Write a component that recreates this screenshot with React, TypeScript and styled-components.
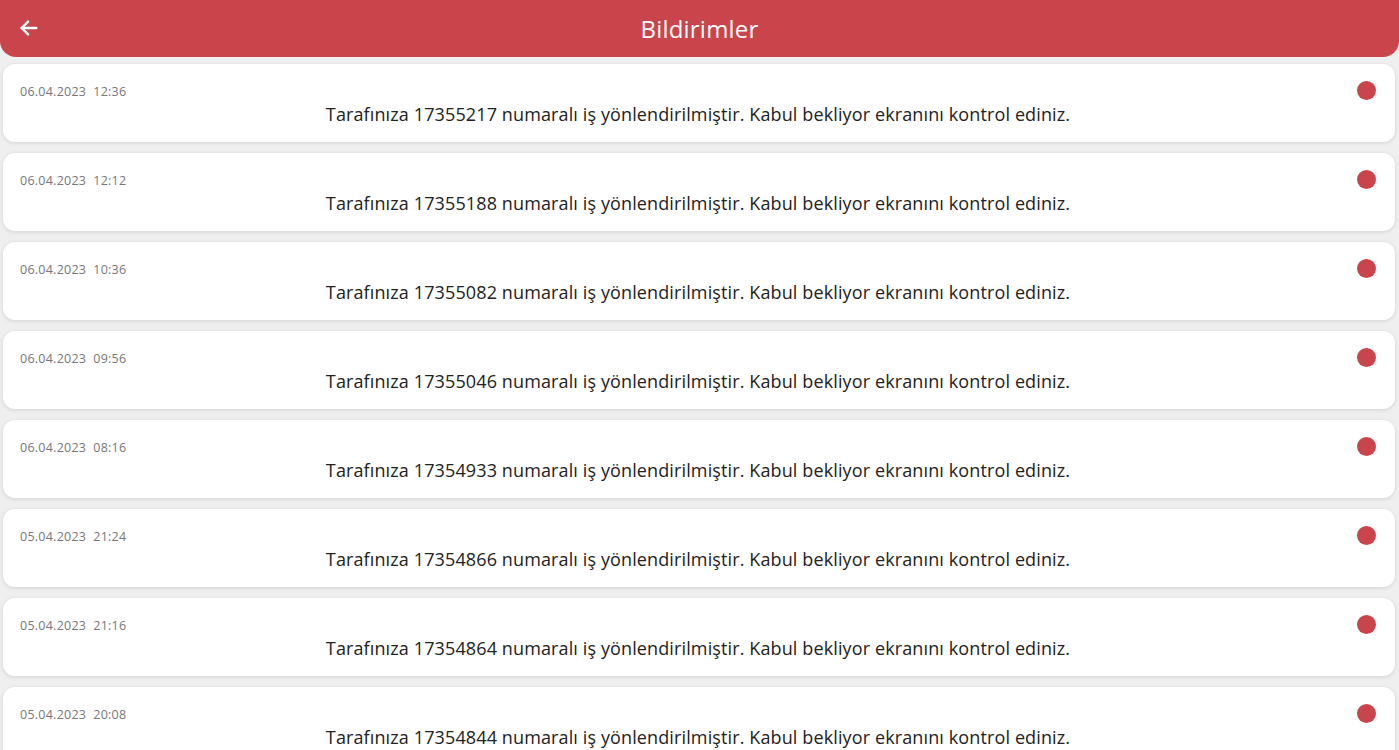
import styled, { createGlobalStyle } from 'styled-components';

const GlobalStyle = createGlobalStyle`
  html, body {
    margin: 0;
    padding: 0;
    background: #efefef;
    font-family: "Open Sans", "Noto Sans", sans-serif;
  }
`;

const notifications = [
  { date: '06.04.2023', time: '12:36', no: '17355217' },
  { date: '06.04.2023', time: '12:12', no: '17355188' },
  { date: '06.04.2023', time: '10:36', no: '17355082' },
  { date: '06.04.2023', time: '09:56', no: '17355046' },
  { date: '06.04.2023', time: '08:16', no: '17354933' },
  { date: '05.04.2023', time: '21:24', no: '17354866' },
  { date: '05.04.2023', time: '21:16', no: '17354864' },
  { date: '05.04.2023', time: '20:08', no: '17354844' },
];

const App = () => {
  return (
    <>
      <GlobalStyle />
      <Page>
        <Header>
          <BackButton aria-label="Geri">
            <svg width="22" height="22" viewBox="0 0 24 24" fill="none" stroke="#fff" strokeWidth="2.6" strokeLinecap="round" strokeLinejoin="round">
              <path d="M20 12H4" />
              <path d="M11 5l-7 7 7 7" />
            </svg>
          </BackButton>
          <Title>Bildirimler</Title>
        </Header>
        <List>
          {notifications.map((n) => (
            <Card key={n.no}>
              <CardTop>
                <Stamp>{n.date}&nbsp;&nbsp;{n.time}</Stamp>
                <Dot />
              </CardTop>
              <Message>
                Tarafınıza {n.no} numaralı iş yönlendirilmiştir. Kabul bekliyor ekranını kontrol ediniz.
              </Message>
            </Card>
          ))}
        </List>
      </Page>
    </>
  );
};

export default App;

const Page = styled.div`
  height: 750px;
  overflow: hidden;
  display: flex;
  flex-direction: column;
`;

const Header = styled.header`
  position: relative;
  height: 57px;
  flex-shrink: 0;
  background: #c9444b;
  border-radius: 0 0 16px 16px;
  display: flex;
  align-items: center;
  justify-content: center;
`;

const BackButton = styled.button`
  position: absolute;
  left: 18px;
  top: 17px;
  padding: 0;
  border: none;
  background: none;
  display: flex;
  cursor: pointer;
`;

const Title = styled.h1`
  margin: 0;
  color: #fff;
  font-size: 24px;
  font-weight: 400;
  letter-spacing: 0.2px;
`;

const List = styled.div`
  display: flex;
  flex-direction: column;
  gap: 11px;
  padding: 7px 4px 0 3px;
`;

const Card = styled.div`
  height: 78px;
  flex-shrink: 0;
  box-sizing: border-box;
  background: #fff;
  border-radius: 12px;
  box-shadow: 0 1px 4px rgba(0, 0, 0, 0.12);
  padding: 17px 19px 0 17px;
  display: flex;
  flex-direction: column;
`;

const CardTop = styled.div`
  display: flex;
  justify-content: space-between;
  align-items: flex-start;
  height: 19px;
`;

const Stamp = styled.span`
  font-size: 12.5px;
  letter-spacing: 0.25px;
  color: #777;
  margin-top: 2px;
`;

const Dot = styled.span`
  width: 19px;
  height: 19px;
  border-radius: 50%;
  background: #c9444b;
`;

const Message = styled.p`
  margin: 1px 0 0;
  text-align: center;
  font-size: 18px;
  letter-spacing: 0.12px;
  color: #222;
  line-height: 26px;
`;
